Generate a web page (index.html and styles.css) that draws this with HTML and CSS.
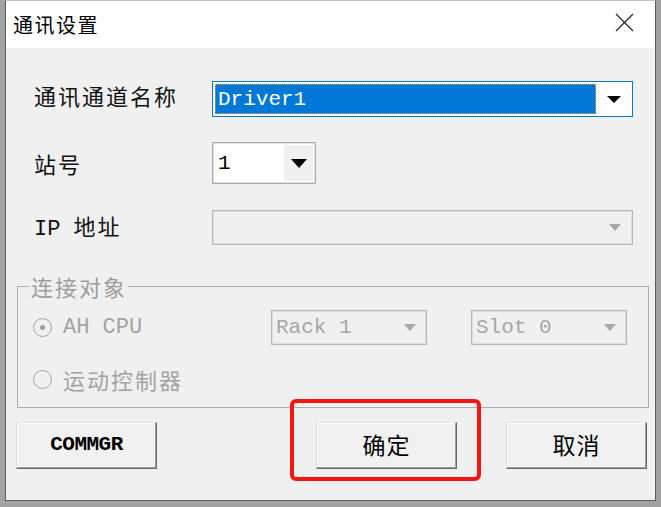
FILE: index.html
```html
<!DOCTYPE html>
<html lang="zh">
<head>
<meta charset="utf-8">
<title>通讯设置</title>
<link rel="stylesheet" href="styles.css">
</head>
<body>
<div class="window">
  <div class="titlebar">
    <span class="title">通讯设置</span>
    <svg class="close" width="19" height="19" viewBox="0 0 19 19"><path d="M1 1L18 18M18 1L1 18" stroke="#2b2b2b" stroke-width="1.3" fill="none"/></svg>
  </div>
  <div class="content">
    <div class="row row1">
      <span class="label label-up">通讯通道名称</span>
      <div class="combo combo-focus wide h36">
        <div class="combo-field"><span class="sel">Driver1</span></div>
        <div class="combo-btn"><span class="tri"></span></div>
      </div>
    </div>
    <div class="row row2">
      <span class="label">站号</span>
      <div class="combo combo-normal small h42">
        <div class="combo-field"><span class="val">1</span></div>
        <div class="combo-btn gray"><span class="tri tri-big"></span></div>
      </div>
    </div>
    <div class="row row3">
      <span class="label"><span class="lat">IP </span>地址</span>
      <div class="combo combo-disabled wide h35">
        <div class="combo-field"></div>
        <div class="combo-btn"><span class="tri tri-dis"></span></div>
      </div>
    </div>
    <fieldset class="group">
      <legend class="group-title">连接对象</legend>
      <div class="grp-row first">
        <div class="radio-item">
          <span class="radio checked"></span>
          <span class="radio-text lat">AH CPU</span>
        </div>
        <div class="combo combo-disabled dcombo">
          <div class="combo-field"><span class="dis-text">Rack 1</span></div>
          <div class="combo-btn"><span class="tri tri-dis"></span></div>
        </div>
        <div class="combo combo-disabled dcombo slot">
          <div class="combo-field"><span class="dis-text">Slot 0</span></div>
          <div class="combo-btn"><span class="tri tri-dis"></span></div>
        </div>
      </div>
      <div class="grp-row second">
        <div class="radio-item">
          <span class="radio"></span>
          <span class="radio-text">运动控制器</span>
        </div>
      </div>
    </fieldset>
    <div class="buttons">
      <button class="btn lat-btn">COMMGR</button>
      <div class="ok-wrap">
        <button class="btn cjk-btn">确定</button>
        <span class="highlight"></span>
      </div>
      <button class="btn cjk-btn cancel">取消</button>
    </div>
  </div>
</div>
</body>
</html>
```

FILE: styles.css
```css
html, body {
  margin: 0;
  padding: 0;
}
body {
  background: #a2a2a2;
  width: 661px;
  height: 507px;
  overflow: hidden;
  font-family: "Noto Sans CJK SC", "Liberation Sans", sans-serif;
}
.window {
  box-sizing: border-box;
  width: 651px;
  height: 501px;
  margin-left: 5px;
  border: 1px solid #5c5c5c;
  border-top-color: #c4c4c4;
  background: #f0f0f0;
  display: flex;
  flex-direction: column;
}
.titlebar {
  height: 47px;
  background: #ffffff;
  display: flex;
  align-items: center;
  padding-left: 7px;
  padding-right: 21px;
  flex-shrink: 0;
}
.title {
  font-size: 20px;
  color: #000;
  letter-spacing: 1.5px;
  flex: 1;
}
.close {
  display: block;
  margin-top: -4px;
}
.content {
  flex: 1;
  padding-top: 33px;
  display: flex;
  flex-direction: column;
}
.row {
  display: flex;
  align-items: center;
  padding-left: 28px;
}
.row2 { margin-top: 25px; }
.row3 { margin-top: 26px; }
.label {
  width: 178px;
  font-size: 22px;
  letter-spacing: 2px;
  color: #111;
  line-height: 26px;
}
.label-up { margin-bottom: 8px; }
.lat {
  font-family: "Liberation Mono", monospace;
  font-size: 22px;
  letter-spacing: 0;
}
.combo {
  box-sizing: border-box;
  display: flex;
  align-items: stretch;
}
.wide { width: 421px; }
.small { width: 104px; }
.h36 { height: 36px; }
.h42 { height: 42px; }
.h35 { height: 35px; }
.combo-field {
  flex: 1;
  display: flex;
  align-items: center;
}
.combo-btn {
  display: flex;
  align-items: center;
  justify-content: center;
}
.tri {
  width: 0;
  height: 0;
  border-left: 7px solid transparent;
  border-right: 7px solid transparent;
  border-top: 7px solid #000;
}
.tri-big {
  border-left-width: 8px;
  border-right-width: 8px;
  border-top-width: 9px;
}
.tri-dis {
  border-left-width: 6px;
  border-right-width: 6px;
  border-top: 7px solid #a8a8a8;
}
.combo-focus {
  border: 1px solid #0078d7;
  background: #ffffff;
  padding: 2px 1px 2px 2px;
}
.combo-focus .combo-field {
  background: #0078d7;
  outline: 1px dotted #e8a040;
  outline-offset: -1px;
}
.combo-focus .combo-btn { width: 35px; }
.sel {
  font-family: "Liberation Mono", monospace;
  font-size: 21px;
  color: #ffffff;
  padding-left: 3px;
}
.combo-normal {
  border: 1px solid #a9a9a9;
  box-shadow: inset 0 0 0 1px #e2e2e2;
  background: #ffffff;
  padding: 2px;
}
.combo-normal .combo-btn {
  width: 29px;
}
.gray { background: #f0f0f0; }
.val {
  font-family: "Liberation Mono", monospace;
  font-size: 21px;
  color: #000;
  padding-left: 3px;
}
.combo-disabled {
  border: 1px solid #b6b6b6;
  box-shadow: inset 0 0 0 1px #dddddd;
  background: #f0f0f0;
}
.combo-disabled .combo-btn { width: 32px; }
.h35 .combo-btn { width: 34px; }
.dis-text {
  font-family: "Liberation Mono", monospace;
  font-size: 21px;
  color: #a6a6a6;
  padding-left: 4px;
}
.group {
  margin: 28px 6px 0 11px;
  padding: 0 0 13px 15px;
  border: 1px solid #aeaeae;
  min-width: 0;
}
.group-title {
  font-size: 22px;
  letter-spacing: 2px;
  line-height: 26px;
  color: #9d9d9d;
  padding: 0 1px 0 2px;
  margin-left: -4px;
}
.grp-row {
  display: flex;
  align-items: center;
}
.grp-row.first {
  margin-top: 11px;
  height: 35px;
}
.grp-row.second {
  margin-top: 19px;
  height: 30px;
}
.radio-item {
  width: 238px;
  display: flex;
  align-items: center;
  gap: 11px;
}
.radio {
  box-sizing: border-box;
  width: 19px;
  height: 19px;
  border-radius: 50%;
  border: 1px solid #a4a4a4;
  background: #f0f0f0;
  display: flex;
  align-items: center;
  justify-content: center;
}
.radio.checked::after {
  content: "";
  width: 5px;
  height: 5px;
  border-radius: 50%;
  background: #9c9c9c;
}
.radio-text {
  font-size: 22px;
  letter-spacing: 2px;
  color: #a2a2a2;
}
.radio-text.lat {
  font-size: 22px;
  letter-spacing: 0;
}
.dcombo {
  width: 156px;
  height: 35px;
}
.slot { margin-left: 44px; }
.buttons {
  display: flex;
  margin-top: 14px;
  padding-left: 10px;
}
.btn {
  box-sizing: border-box;
  width: 141px;
  height: 47px;
  background: #f1f1f1;
  border: 1px solid;
  border-color: #e6e6e6 #666666 #666666 #dcdcdc;
  box-shadow: inset -1px -1px 0 #a0a0a0, inset 1px 1px 0 #ffffff;
  color: #000;
  padding: 0 0 3px 0;
  margin: 0;
}
.lat-btn {
  font-family: "Liberation Mono", monospace;
  font-size: 21px;
  font-weight: bold;
  letter-spacing: -0.5px;
}
.cjk-btn {
  font-family: "Noto Sans CJK SC", sans-serif;
  font-size: 23px;
  letter-spacing: 1px;
}
.ok-wrap {
  position: relative;
  margin-left: 159px;
}
.ok-wrap .btn { display: block; }
.highlight {
  position: absolute;
  left: -26px;
  top: -23px;
  width: 191px;
  height: 82px;
  box-sizing: border-box;
  border: 4px solid #f8150f;
  border-radius: 6px;
  pointer-events: none;
}
.cancel { margin-left: 49px; }
```
